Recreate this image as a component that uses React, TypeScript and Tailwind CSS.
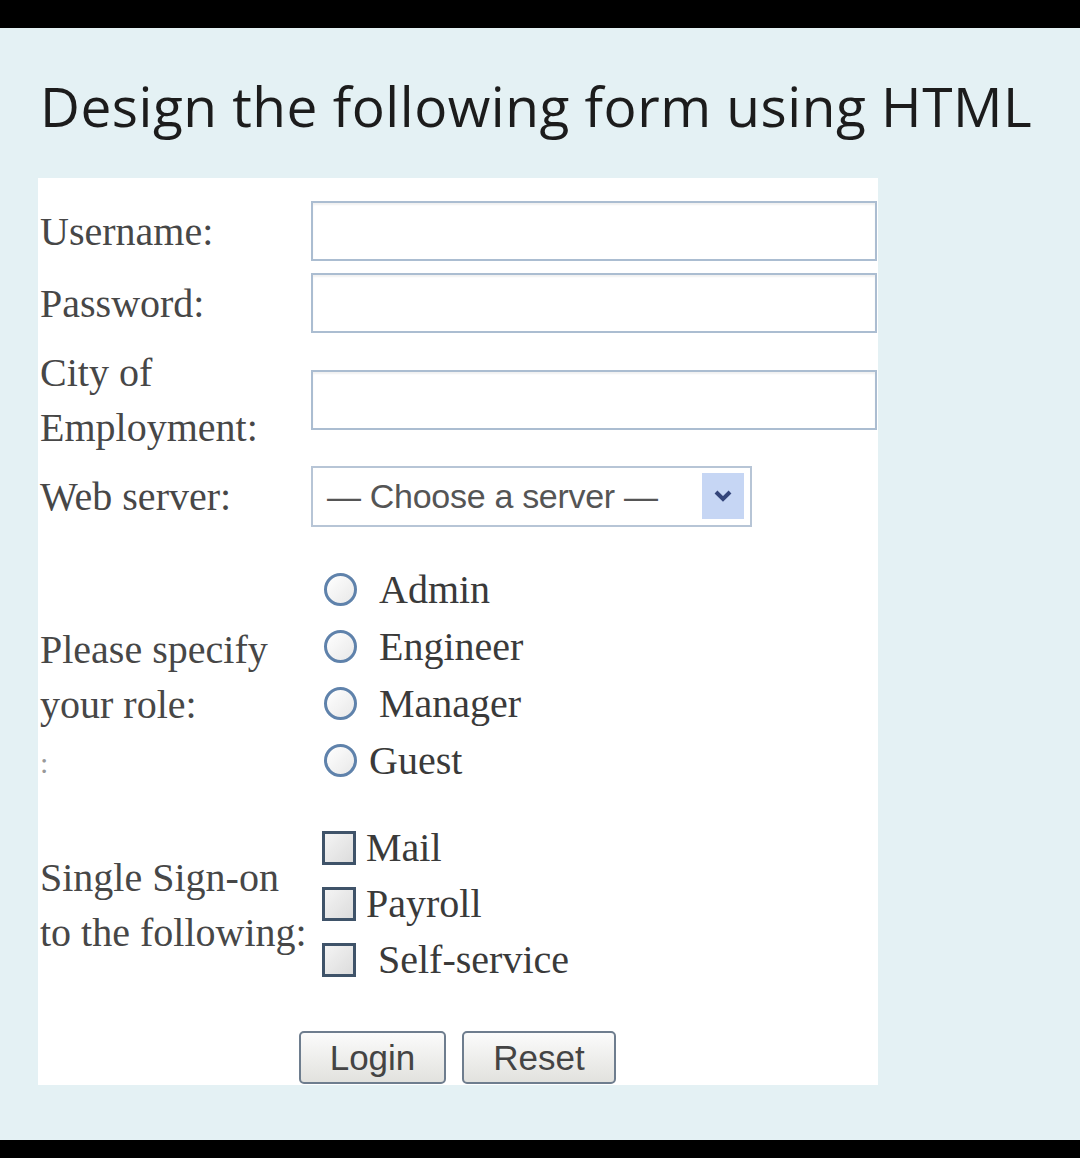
export default function App() {
  const roles = [
    { name: 'Admin', gap: 'ml-[22px]' },
    { name: 'Engineer', gap: 'ml-[22px]' },
    { name: 'Manager', gap: 'ml-[22px]' },
    { name: 'Guest', gap: 'ml-[12px]' },
  ];
  const apps = [
    { name: 'Mail', gap: 'ml-[10px]' },
    { name: 'Payroll', gap: 'ml-[10px]' },
    { name: 'Self-service', gap: 'ml-[22px]' },
  ];

  const label = "w-[273px] shrink-0 pl-[2px] text-[40px] leading-[55px] text-[#474747] font-['Liberation_Serif',serif]";
  const textBox =
    'w-[566px] h-[60px] border-2 border-[#abbdd1] bg-white shadow-[inset_0_2px_2px_rgba(0,0,0,0.06)]';

  return (
    <div className="w-[1080px] h-[1158px] bg-black flex flex-col">
      <div className="h-[28px] shrink-0" />
      <main className="h-[1112px] bg-[#e4f1f4] pl-[38px]">
        <h1 className="pt-[38px] pb-[7px] h-[150px] text-[#1c1c1c] text-[55px] leading-[80px] tracking-[0.5px] font-['Open_Sans',sans-serif] pl-[2px]">
          Design the following form using HTML
        </h1>

        <div className="w-[840px] h-[907px] bg-white pt-[17px]">
          <div className="flex items-center h-[72px]">
            <div className={label}>Username:</div>
            <div className={textBox} />
          </div>
          <div className="flex items-center h-[72px]">
            <div className={label}>Password:</div>
            <div className={textBox} />
          </div>
          <div className="flex items-center h-[122px]">
            <div className={label}>
              City of
              <br />
              Employment:
            </div>
            <div className={textBox} />
          </div>
          <div className="flex items-center h-[70px]">
            <div className={label}>Web server:</div>
            <div className="w-[441px] h-[61px] border-2 border-[#b7c5d6] bg-white flex items-center pl-[14px] pr-[6px]">
              <span className="flex-1 text-[34px] text-[#555] font-['Liberation_Sans',sans-serif] tracking-[-0.3px]">
                — Choose a server —
              </span>
              <span className="w-[42px] h-[46px] bg-[#c6d6f4] flex items-center justify-center">
                <svg width="20" height="14" viewBox="0 0 20 14">
                  <path d="M3 3 L10 10 L17 3" fill="none" stroke="#34457a" strokeWidth="4" />
                </svg>
              </span>
            </div>
          </div>

          <div className="flex">
            <div className={`${label} pt-[91px]`}>
              Please specify
              <br />
              your role:
              <br />
              <span className="text-[#999] text-[30px]">:</span>
            </div>
            <div className="pt-[30px] pl-[13px]">
              {roles.map((r) => (
                <div key={r.name} className="flex items-center h-[57px]">
                  <span className="w-[33px] h-[33px] rounded-full border-[3px] border-[#5f82ab] bg-gradient-to-br from-white to-[#e8e8e8]" />
                  <span className={`${r.gap} text-[40px] text-[#3a3a3a] font-['Liberation_Serif',serif]`}>{r.name}</span>
                </div>
              ))}
            </div>
          </div>

          <div className="flex pt-[30px]">
            <div className={`${label} pt-[30px]`}>
              Single Sign-on
              <br />
              to the following:
            </div>
            <div className="pl-[11px]">
              {apps.map((a) => (
                <div key={a.name} className="flex items-center h-[56px]">
                  <span className="w-[34px] h-[34px] border-[3px] border-[#3f5369] bg-gradient-to-br from-[#f4f4f4] to-[#dcdcdc]" />
                  <span className={`${a.gap} text-[40px] text-[#3a3a3a] font-['Liberation_Serif',serif]`}>{a.name}</span>
                </div>
              ))}
            </div>
          </div>

          <div className="flex gap-[16px] ml-[261px] mt-[43px]">
            <button className="w-[147px] h-[53px] rounded-[5px] border-2 border-[#6e7d8e] bg-gradient-to-b from-[#fbfbfb] to-[#e2e2de] text-[35px] text-[#444] font-['Liberation_Sans',sans-serif] leading-none">
              Login
            </button>
            <button className="w-[154px] h-[53px] rounded-[5px] border-2 border-[#6e7d8e] bg-gradient-to-b from-[#fbfbfb] to-[#e2e2de] text-[35px] text-[#444] font-['Liberation_Sans',sans-serif] leading-none">
              Reset
            </button>
          </div>
        </div>
      </main>
      <div className="h-[18px] shrink-0" />
    </div>
  );
}
